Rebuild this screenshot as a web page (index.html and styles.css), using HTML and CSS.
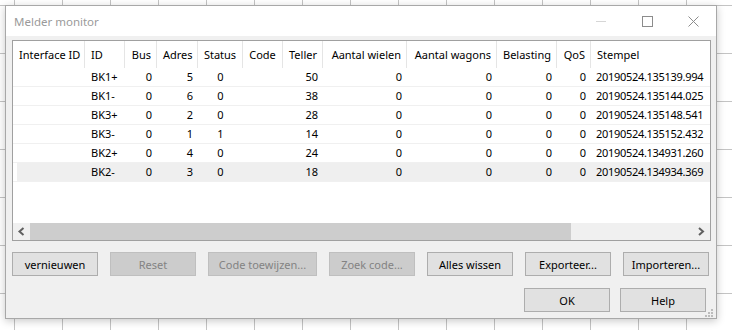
FILE: index.html
```html
<!DOCTYPE html>
<html lang="nl">
<head>
    <meta charset="UTF-8">
    <title>Melder monitor</title>
    <link rel="stylesheet" href="styles.css">
</head>
<body>
    <div class="window">
        <div class="titlebar">
            <span class="title">Melder monitor</span>
            <div class="caption">
                <span class="cap-btn">
                    <svg width="10" height="10" viewBox="0 0 10 10"><line x1="0" y1="5.5" x2="10" y2="5.5" stroke="#d6d6d6" stroke-width="1"/></svg>
                </span>
                <span class="cap-btn">
                    <svg width="11" height="11" viewBox="0 0 11 11"><rect x="0.5" y="0.5" width="10" height="10" fill="none" stroke="#8c8c8c" stroke-width="1"/></svg>
                </span>
                <span class="cap-btn">
                    <svg width="11" height="11" viewBox="0 0 11 11"><path d="M0.5 0.5 L10.5 10.5 M10.5 0.5 L0.5 10.5" stroke="#8c8c8c" stroke-width="1"/></svg>
                </span>
            </div>
        </div>

        <div class="client">
            <div class="listview">
                <div class="list-area">
                    <div class="row head">
                        <div class="cell">Interface ID</div>
                        <div class="cell">ID</div>
                        <div class="cell num">Bus</div>
                        <div class="cell num">Adres</div>
                        <div class="cell mid">Status</div>
                        <div class="cell mid">Code</div>
                        <div class="cell num">Teller</div>
                        <div class="cell num">Aantal wielen</div>
                        <div class="cell num">Aantal wagons</div>
                        <div class="cell num">Belasting</div>
                        <div class="cell num">QoS</div>
                        <div class="cell">Stempel</div>
                        <div class="cell"></div>
                    </div>
                    <div id="rows"></div>
                </div>
                <div class="hscroll">
                    <span class="sb-btn">
                        <svg width="17" height="17" viewBox="0 0 17 17"><polyline points="10.5,5 6.5,8.5 10.5,12" fill="none" stroke="#606060" stroke-width="2"/></svg>
                    </span>
                    <span class="sb-thumb"></span>
                    <span class="sb-track"></span>
                    <span class="sb-btn">
                        <svg width="17" height="17" viewBox="0 0 17 17"><polyline points="6,5 10,8.5 6,12" fill="none" stroke="#606060" stroke-width="2"/></svg>
                    </span>
                </div>
            </div>

            <div class="button-row">
                <button class="btn">vernieuwen</button>
                <button class="btn" disabled>Reset</button>
                <button class="btn wide" disabled>Code toewijzen...</button>
                <button class="btn" disabled>Zoek code...</button>
                <button class="btn">Alles wissen</button>
                <button class="btn">Exporteer...</button>
                <button class="btn">Importeren...</button>
            </div>

            <div class="button-row end">
                <button class="btn">OK</button>
                <button class="btn">Help</button>
            </div>
        </div>

        <svg class="grip" width="9" height="9" viewBox="0 0 9 9">
            <rect x="6" y="0" width="2" height="2" fill="#bcbcbc"/>
            <rect x="3" y="3" width="2" height="2" fill="#bcbcbc"/>
            <rect x="6" y="3" width="2" height="2" fill="#bcbcbc"/>
            <rect x="0" y="6" width="2" height="2" fill="#bcbcbc"/>
            <rect x="3" y="6" width="2" height="2" fill="#bcbcbc"/>
            <rect x="6" y="6" width="2" height="2" fill="#bcbcbc"/>
        </svg>
    </div>

    <script>
        const melders = [
            { id: 'BK1+', bus: 0, adres: 5, status: 0, teller: 50, stempel: '20190524.135139.994' },
            { id: 'BK1-', bus: 0, adres: 6, status: 0, teller: 38, stempel: '20190524.135144.025' },
            { id: 'BK3+', bus: 0, adres: 2, status: 0, teller: 28, stempel: '20190524.135148.541' },
            { id: 'BK3-', bus: 0, adres: 1, status: 1, teller: 14, stempel: '20190524.135152.432' },
            { id: 'BK2+', bus: 0, adres: 4, status: 0, teller: 24, stempel: '20190524.134931.260' },
            { id: 'BK2-', bus: 0, adres: 3, status: 0, teller: 18, stempel: '20190524.134934.369' }
        ];

        const rows = document.getElementById('rows');

        melders.forEach((m, i) => {
            const row = document.createElement('div');
            row.className = 'row' + (i === melders.length - 1 ? ' hover' : '');
            row.innerHTML = `
                <div class="cell"></div>
                <div class="cell">${m.id}</div>
                <div class="cell num">${m.bus}</div>
                <div class="cell num">${m.adres}</div>
                <div class="cell mid">${m.status}</div>
                <div class="cell mid"></div>
                <div class="cell num">${m.teller}</div>
                <div class="cell num">0</div>
                <div class="cell num">0</div>
                <div class="cell num">0</div>
                <div class="cell num">0</div>
                <div class="cell stamp">${m.stempel}</div>
                <div class="cell"></div>
            `;
            rows.appendChild(row);
        });
    </script>
</body>
</html>
```

FILE: styles.css
```css
html,
body {
    margin: 0;
    padding: 0;
}

body {
    width: 732px;
    height: 330px;
    overflow: hidden;
    font-family: "Noto Sans", "Open Sans", sans-serif;
    font-size: 11px;
    color: #000;
    background-color: #fff;
    background-image:
        linear-gradient(to right, #c4c4c4 1px, transparent 1px),
        linear-gradient(to bottom, #c4c4c4 1px, transparent 1px);
    background-size: 48px 48px;
    background-position: 14px 5px;
}

.window {
    position: relative;
    box-sizing: border-box;
    width: 712px;
    height: 314px;
    margin: 5px 0 0 5px;
    background: #f0f0f0;
    border: 1px solid #a8a8a8;
    box-shadow: 0 2px 8px rgba(0, 0, 0, 0.22);
    display: flex;
    flex-direction: column;
}

.titlebar {
    height: 30px;
    background: #fff;
    display: flex;
    align-items: center;
    padding-left: 8px;
}

.title {
    font-size: 11.5px;
    color: #9a9a9a;
}

.caption {
    margin-left: auto;
    display: flex;
    height: 30px;
}

.cap-btn {
    width: 46px;
    height: 30px;
    display: flex;
    align-items: center;
    justify-content: center;
}

.client {
    flex: 1;
    padding: 4px 5px 0 6px;
}

.listview {
    box-sizing: border-box;
    height: 201px;
    border: 1px solid #a0a0a0;
    background: #fff;
    display: flex;
    flex-direction: column;
}

.list-area {
    flex: 1;
    overflow: hidden;
}

.row {
    display: grid;
    grid-template-columns: 72px 40px 32px 41px 45px 40px 40px 84px 90px 60px 34px 120px 160px;
    height: 19px;
    box-sizing: border-box;
    border-bottom: 1px solid #f0f0f0;
    line-height: 18px;
    white-space: nowrap;
}

.row.head {
    height: 27px;
    line-height: 27px;
    border-bottom: none;
}

.row.head .cell {
    border-right: 1px solid #e5e5e5;
}

.row.hover {
    background: linear-gradient(to right, #fff 4px, #efefef 4px);
}

.cell {
    box-sizing: border-box;
    padding: 0 5px 0 6px;
    overflow: hidden;
}

.cell.num {
    text-align: right;
}

.cell.mid {
    text-align: center;
    padding: 0;
}

.cell.stamp {
    padding-left: 5px;
    letter-spacing: -0.3px;
}

.hscroll {
    height: 17px;
    display: flex;
    background: #f0f0f0;
}

.sb-btn {
    width: 17px;
    height: 17px;
    display: block;
}

.sb-btn svg {
    display: block;
}

.sb-thumb {
    width: 541px;
    background: #cdcdcd;
}

.sb-track {
    flex: 1;
}

.button-row {
    display: flex;
    gap: 12px;
    margin-top: 11px;
}

.button-row.end {
    justify-content: flex-end;
    gap: 10px;
    margin-top: 12px;
    margin-right: 5px;
}

.btn {
    box-sizing: border-box;
    width: 86px;
    height: 24px;
    padding: 0;
    font-family: "Noto Sans", "Open Sans", sans-serif;
    font-size: 11px;
    color: #000;
    background: #e1e1e1;
    border: 1px solid #adadad;
    border-radius: 0;
}

.btn.wide {
    width: 109px;
}

.btn:disabled {
    background: #cccccc;
    border-color: #bfbfbf;
    color: #838383;
}

.grip {
    position: absolute;
    right: 2px;
    bottom: 0;
}
```
